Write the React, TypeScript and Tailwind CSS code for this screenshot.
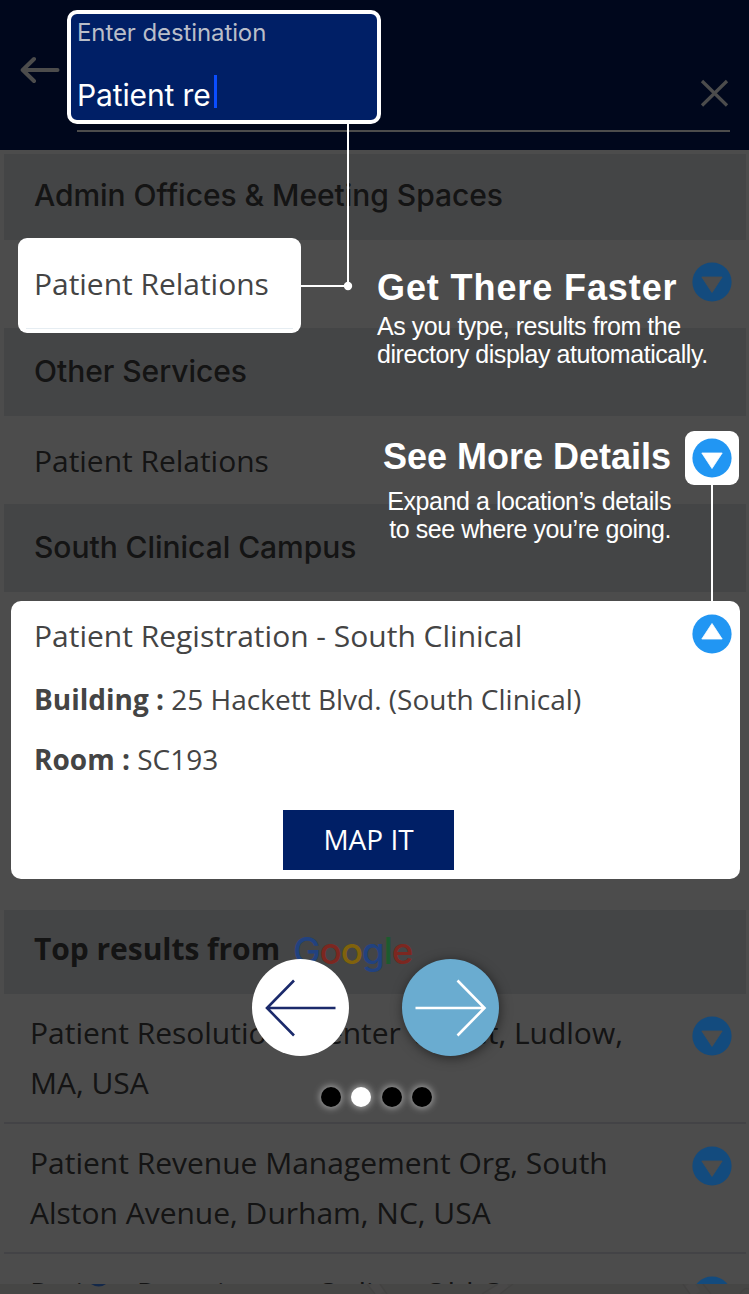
import type { ReactNode } from "react";

const OPEN = "font-['Open_Sans',sans-serif]";
const INTER = "font-[Inter,sans-serif]";
const ARIAL = "font-['Liberation_Sans',sans-serif]";

function Toggle({ up = false, dim = false }: { up?: boolean; dim?: boolean }) {
  const mark = dim ? "#4c4c4c" : "#fff";
  return (
    <svg
      className={dim ? "relative z-10 block h-10 w-10 shrink-0" : "block h-10 w-10 shrink-0"}
      viewBox="0 0 40 40"
      aria-hidden="true"
    >
      <circle cx="20" cy="20" r="19.6" fill={dim ? "#134b7e" : "#2196f3"} />
      <path
        d={up ? "M20 9.5 L30.2 25 H9.8 Z" : "M9.8 15 H30.2 L20 30.5 Z"}
        fill={mark}
        stroke={mark}
        strokeWidth="0.8"
        strokeLinejoin="round"
      />
    </svg>
  );
}

function GroupHeading({ children }: { children: ReactNode }) {
  return (
    <h2 className={`${INTER} flex h-[88px] items-center bg-[#e4e6ea] pb-0.5 pl-[30px] text-[30px] font-medium tracking-[-0.04px] text-[#444]`}>
      {children}
    </h2>
  );
}

function PlaceRow({ children }: { children: ReactNode }) {
  return (
    <div className={`${OPEN} flex h-22 items-center justify-between pr-3.5 pb-1 pl-[30px] text-[30px] tracking-[-0.03px] text-[#444]`}>
      <span className="pt-1">{children}</span>
      <Toggle dim />
    </div>
  );
}

function GoogleRow({ children }: { children: ReactNode }) {
  return (
    <div className={`${OPEN} flex h-[130px] items-start justify-between border-b-2 border-[#e0e2ea] pt-[14px] pr-3.5 pl-[26px] text-[30px] leading-[50px] tracking-[-0.01px] text-[#444]`}>
      <span className="w-[620px]">{children}</span>
      <div className="pt-2">
        <Toggle dim />
      </div>
    </div>
  );
}

function GoogleLogo() {
  return (
    <span className={`${INTER} relative z-10 mt-1 ml-[13px] text-[37px] leading-none font-medium tracking-[-1.2px]`}>
      <span className="text-[#22427f]">G</span>
      <span className="text-[#7c2720]">o</span>
      <span className="text-[#80620c]">o</span>
      <span className="text-[#22427f]">g</span>
      <span className="text-[#1d5a2f]">l</span>
      <span className="text-[#7c2720]">e</span>
    </span>
  );
}

function SearchPage() {
  return (
    <div className="flex h-full flex-col bg-white">
      <header className="flex h-[150px] shrink-0 bg-[#021a5e] pr-[19px] pl-5">
        <svg className="mt-[55px] h-[30px] w-10" viewBox="0 0 40 30" fill="none" stroke="#fff" strokeWidth="4" strokeLinecap="round" strokeLinejoin="round">
          <path d="M37.5 15H3M14 4L2.700 15L14 26" />
        </svg>
        <div className="ml-[17px] flex h-[132px] flex-1 items-end justify-end border-b-2 border-white pb-[23px]">
          <svg className="h-[30px] w-[31px]" viewBox="0 0 31 30" fill="none" stroke="#fff" strokeWidth="3.2">
            <path d="M3 4L28 28.500M28 4L3 28.500" />
          </svg>
        </div>
      </header>
      <main className="h-[1134px] shrink-0 overflow-hidden pr-[3px] pl-1">
        <div className="pt-1">
          <h2 className={`${INTER} flex h-[86px] items-center bg-[#e4e6ea] pb-1 pl-[30px] text-[30px] font-medium tracking-[-0.04px] text-[#444]`}>
            Admin Offices &amp; Meeting Spaces
          </h2>
        </div>
        <PlaceRow>Patient Relations</PlaceRow>
        <GroupHeading>Other Services</GroupHeading>
        <PlaceRow>Patient Relations</PlaceRow>
        <GroupHeading>South Clinical Campus</GroupHeading>
        <div className="h-[318px]" />
        <div className={`${OPEN} flex h-[84px] items-center bg-[#e4e6ea] pb-2 pl-[30px] text-[30px] font-bold tracking-[-0.05px] text-[#444]`}>
          <span>Top results from</span>
          <GoogleLogo />
        </div>
        <GoogleRow>
          Patient Resolutions Center <span className="ml-[6px]">Street</span>, Ludlow,
          <br />
          MA, USA
        </GoogleRow>
        <GoogleRow>
          Patient Revenue Management Org, South
          <br />
          Alston Avenue, Durham, NC, USA
        </GoogleRow>
        <GoogleRow>Patient Recruitment Online, Old Court</GoogleRow>
      </main>
      <svg className="block h-2.5 w-full shrink-0" viewBox="0 0 749 10" fill="none">
        <rect width="749" height="10" fill="#ebe9e7" />
        <path d="M91 0Q99 5 106 0Z" fill="#4285f4" />
        <path d="M373 0L380 10M507 0L491 10M689 0L696 10" stroke="#f3f2f0" strokeWidth="10" />
        <path d="M367 0L375 10M380 0L387 10M498 0L482 10M513 0L500 10M683 0L690 10M703 0L711 10M740 10Q744 3 749 5" stroke="#dedcda" strokeWidth="1.500" />
      </svg>
    </div>
  );
}

function Dot({ active = false }: { active?: boolean }) {
  return (
    <span
      className={
        active
          ? "h-5 w-5 rounded-full bg-white shadow-[0_0_7px_1px_rgba(255,255,255,0.5)]"
          : "h-5 w-5 rounded-full bg-black shadow-[0_0_7px_1px_rgba(255,255,255,0.5)]"
      }
    />
  );
}

function Tour() {
  return (
    <div className="absolute inset-0 z-20">
      <div className={`${INTER} absolute top-2.5 left-[67px] h-[114px] w-[314px] rounded-[10px] border-[4px] border-white bg-[#001f66] pl-1.5`}>
        <div className="mt-[3px] text-[24px] leading-8 tracking-[-0.1px] text-[#b9bec9]">Enter destination</div>
        <div className="mt-[18px] flex h-14 items-center text-[30px] leading-9 tracking-[-0.12px] text-white">
          <span>Patient re</span>
          <span className="-mt-[7px] ml-[3px] h-[33px] w-[3px] bg-[#0a4dff]" />
        </div>
      </div>

      <div className={`${OPEN} absolute top-[238px] left-[18px] flex h-[95px] w-[283px] flex-col rounded-[9px] bg-white px-2 text-[30px] tracking-[-0.03px] text-[#444]`}>
        <span className="flex h-[91px] items-center border-b border-[#e6edf2] pt-px pl-2">Patient Relations</span>
      </div>
      <svg className="absolute top-[124px] left-[301px] h-[168px] w-[52px]" viewBox="0 0 52 168" fill="none">
        <path d="M47 0V162H0" stroke="#fff" strokeWidth="2" />
        <circle cx="47" cy="162" r="4.200" fill="#fff" />
      </svg>

      <section className={`${ARIAL} absolute top-[267px] left-[377px] whitespace-nowrap text-white`}>
        <h3 className="text-[36px] leading-[42px] font-bold tracking-[0.9px]">Get There Faster</h3>
        <p className="mt-[3px] text-[25px] leading-7 tracking-[-0.45px]">
          As you type, results from the
          <br />
          directory display atutomatically.
        </p>
      </section>

      <section className={`${ARIAL} absolute top-[436px] right-[78px] text-right whitespace-nowrap text-white`}>
        <h3 className="text-[36px] leading-[42px] font-bold">See More Details</h3>
        <p className="mt-[9px] text-[25px] leading-7 tracking-[-0.44px]">
          Expand a location’s details
          <br />
          to see where you’re going.
        </p>
      </section>

      <div className="absolute top-[431px] left-[685px] flex h-[54px] w-[54px] items-center justify-center rounded-[9px] bg-white">
        <Toggle />
      </div>
      <div className="absolute top-[485px] left-[711px] h-[116px] w-[2px] bg-white" />

      <article className={`${OPEN} absolute top-[601px] left-[11px] flex h-[278px] w-[729px] flex-col rounded-[10px] bg-white pr-2 pl-[23px] text-[28px] text-[#444]`}>
        <div className="flex h-[66px] items-center justify-between pt-0.5 text-[30px]">
          <span>Patient Registration - South Clinical</span>
          <div className="pb-0.5">
            <Toggle up />
          </div>
        </div>
        <p className="mt-[2px] leading-[60px]">
          <b>Building :</b> 25 Hackett Blvd. (South Clinical)
        </p>
        <p className="leading-[60px]">
          <b>Room :</b> SC193
        </p>
        <button className="mt-[21px] ml-[249px] h-[60px] w-[171px] bg-[#001f66] pb-0.5 text-white">MAP IT</button>
      </article>

      <nav className="absolute top-[959px] left-[252px] flex gap-[53px]">
        <button className="h-[97px] w-[97px] rounded-full bg-white">
          <svg viewBox="0 0 97 97" fill="none" stroke="#1b2a6b" strokeWidth="2.600">
            <path d="M83.500 49H15M42 21.500L15 49L42 76.500" />
          </svg>
        </button>
        <button className="h-[97px] w-[97px] rounded-full bg-[#6aacd0] shadow-[1px_2px_12px_rgba(0,0,0,0.5)]">
          <svg viewBox="0 0 97 97" fill="none" stroke="#fff" strokeWidth="2.600">
            <path d="M13.500 49H82M55.500 21.500L82.500 49L55.500 76.500" />
          </svg>
        </button>
      </nav>
      <div className="absolute top-[1087px] left-[321px] flex w-[111px] justify-between">
        <Dot />
        <Dot active />
        <Dot />
        <Dot />
      </div>
    </div>
  );
}

export default function App() {
  return (
    <div className="relative h-[1294px] w-[749px] overflow-hidden">
      <SearchPage />
      <div className="absolute inset-0 bg-black/70" />
      <Tour />
    </div>
  );
}
